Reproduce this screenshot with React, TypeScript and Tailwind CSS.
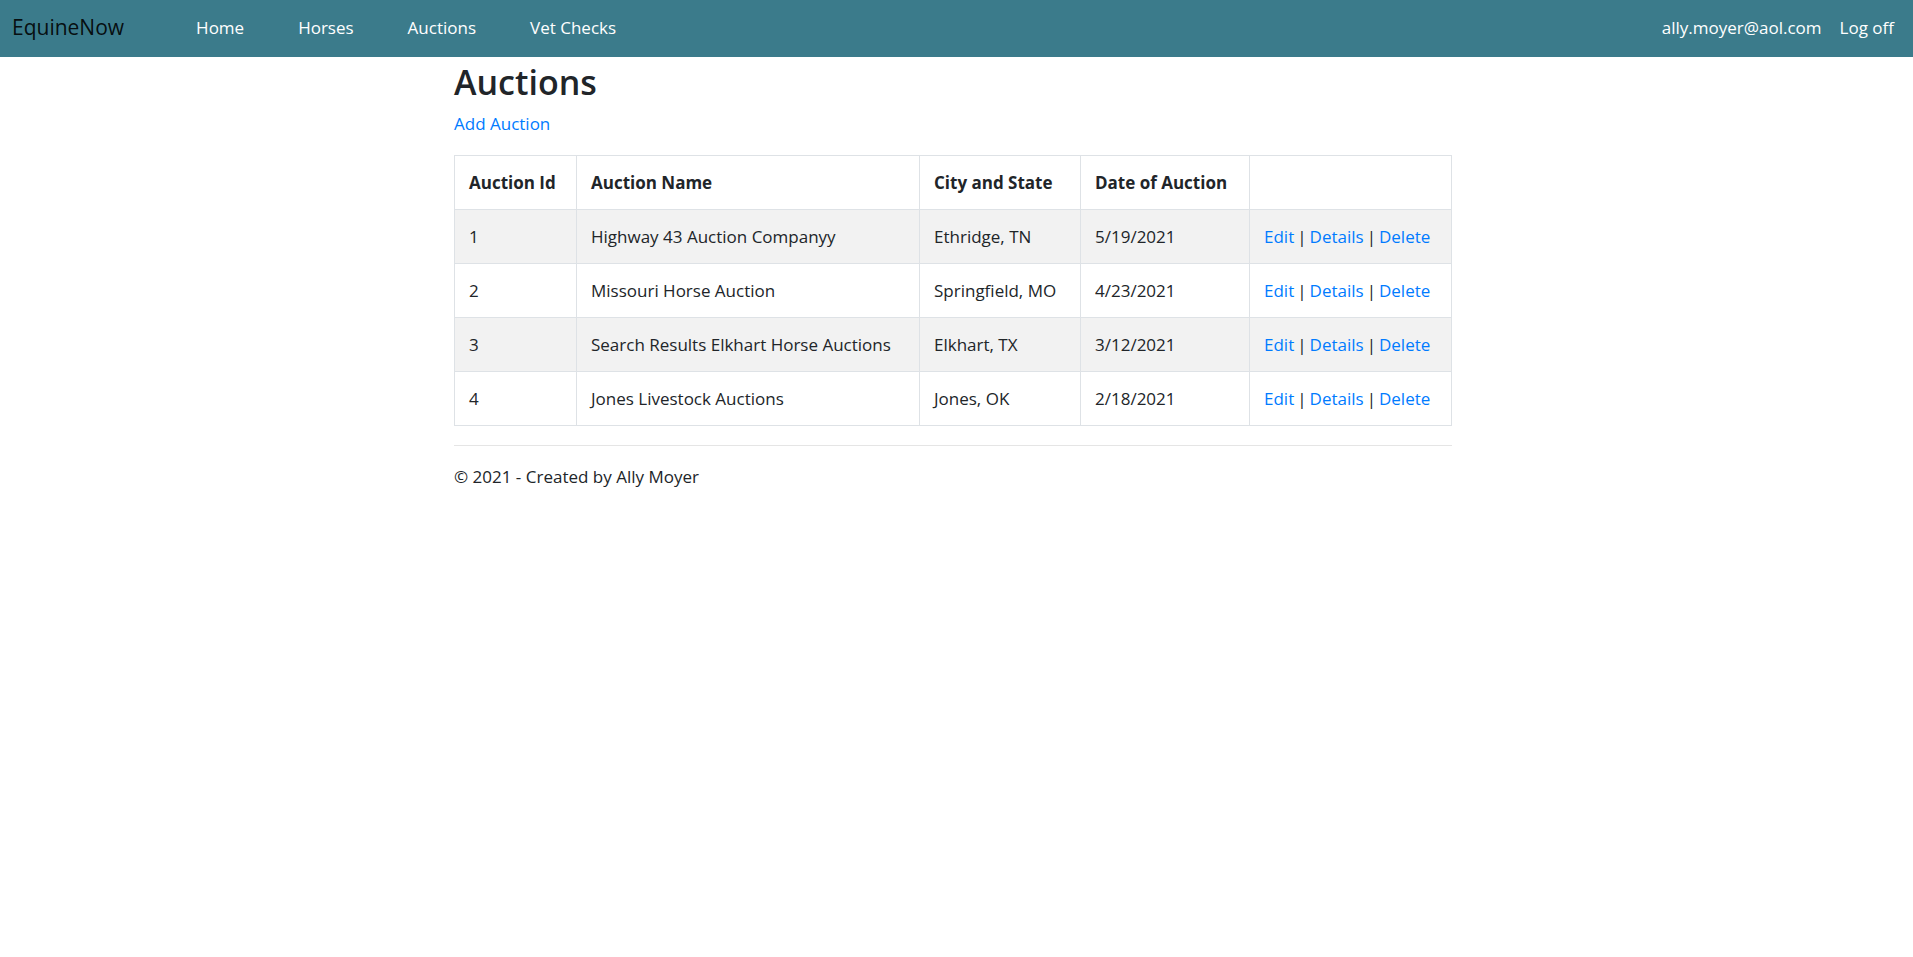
import React from "react";

const auctions = [
  { id: 1, name: "Highway 43 Auction Companyy", city: "Ethridge, TN", date: "5/19/2021" },
  { id: 2, name: "Missouri Horse Auction", city: "Springfield, MO", date: "4/23/2021" },
  { id: 3, name: "Search Results Elkhart Horse Auctions", city: "Elkhart, TX", date: "3/12/2021" },
  { id: 4, name: "Jones Livestock Auctions", city: "Jones, OK", date: "2/18/2021" },
];

function NavBar() {
  return (
    <nav className="flex h-[57px] items-center bg-[#3b7b8b] pb-[2px] text-[17px]">
      <a href="#" className="ml-[12px] text-[21px] text-black/90">
        EquineNow
      </a>
      <div className="ml-[72px] flex gap-[54px] text-white">
        <a href="#">Home</a>
        <a href="#">Horses</a>
        <a href="#">Auctions</a>
        <a href="#">Vet Checks</a>
      </div>
      <div className="ml-auto mr-[19px] flex gap-[18px] text-white">
        <a href="#">ally.moyer@aol.com</a>
        <a href="#">Log off</a>
      </div>
    </nav>
  );
}

function Actions() {
  return (
    <span className="whitespace-nowrap text-[#212529]">
      <a href="#" className="text-[#007bff]">Edit</a>
      <span className="mx-[3px]">|</span>
      <a href="#" className="text-[#007bff]">Details</a>
      <span className="mx-[3px]">|</span>
      <a href="#" className="text-[#007bff]">Delete</a>
    </span>
  );
}

export default function App() {
  return (
    <div className="min-h-screen bg-white font-['Open_Sans',sans-serif] text-[17px] leading-[29px] text-[#212529]">
      <NavBar />
      <div className="ml-[454px] w-[998px]">
        <h2 className="mt-[4px] text-[34px] font-semibold leading-[43px]">Auctions</h2>
        <p className="mt-[5px]">
          <a href="#" className="text-[#007bff]">Add Auction</a>
        </p>
        <table className="mt-[17px] w-full border-collapse border border-[#dee2e6]">
          <thead>
            <tr className="h-[54px] text-left">
              <th className="w-[122px] border border-[#dee2e6] px-[14px] font-bold">Auction Id</th>
              <th className="w-[343px] border border-[#dee2e6] px-[14px] font-bold">Auction Name</th>
              <th className="w-[161px] border border-[#dee2e6] px-[14px] font-bold">City and State</th>
              <th className="w-[169px] border border-[#dee2e6] px-[14px] font-bold">Date of Auction</th>
              <th className="border border-[#dee2e6] px-[14px]"></th>
            </tr>
          </thead>
          <tbody>
            {auctions.map((a, i) => (
              <tr key={a.id} className={i % 2 === 0 ? "h-[54px] bg-[#f2f2f2]" : "h-[54px]"}>
                <td className="border border-[#dee2e6] px-[14px]">{a.id}</td>
                <td className="whitespace-nowrap border border-[#dee2e6] px-[14px]">{a.name}</td>
                <td className="whitespace-nowrap border border-[#dee2e6] px-[14px]">{a.city}</td>
                <td className="border border-[#dee2e6] px-[14px]">{a.date}</td>
                <td className="border border-[#dee2e6] px-[14px]">
                  <Actions />
                </td>
              </tr>
            ))}
          </tbody>
        </table>
        <hr className="mt-[19px] border-t border-[#e5e5e5]" />
        <footer className="mt-[16px]">
          <p>© 2021 - Created by Ally Moyer</p>
        </footer>
      </div>
    </div>
  );
}
